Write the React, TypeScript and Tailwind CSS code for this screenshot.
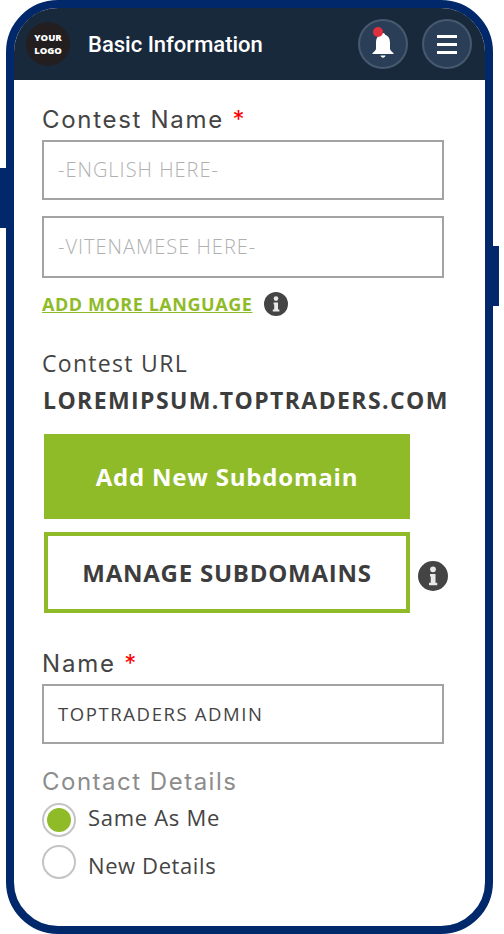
const poppins = "font-['Inter',sans-serif]";
const openSans = "font-['Open_Sans',sans-serif]";

function InfoDot({ size }: { size: string }) {
  return (
    <svg viewBox="0 0 24 24" className={`${size} shrink-0`}>
      <circle cx="12" cy="12" r="12" fill="#444444" />
      <circle cx="12" cy="6.6" r="2.3" fill="#e8e8e8" />
      <path d="M9.6 10.400h4.400v7h1.400v2H8.800v-2h1.400v-5H9.600z" fill="#e8e8e8" />
    </svg>
  );
}

function TextBox({ value, placeholder, className }: { value?: string; placeholder?: string; className: string }) {
  return (
    <div className={`w-[402px] border-2 border-[#a3a3a3] flex items-center pl-[14px] text-[20px] ${openSans} ${className}`}>
      {value ? (
        <span className="text-[#444444] text-[18.5px] tracking-[1.6px]">{value}</span>
      ) : (
        <span className="text-[#b0b0b0] font-light tracking-[1px]">{placeholder}</span>
      )}
    </div>
  );
}

export default function App() {
  return (
    <div className="relative w-[504px] h-[934px] bg-white overflow-hidden">
      {/* side buttons */}
      <div className="absolute left-0 top-[168px] w-[8px] h-[60px] bg-[#00286a]" />
      <div className="absolute left-[490px] top-[246px] w-[9px] h-[60px] bg-[#00286a]" />

      <div className="relative ml-[6px] w-[487px] h-[934px] border-[8px] border-[#00286a] rounded-[52px] bg-white overflow-hidden">
        {/* Header */}
        <header className="h-[72px] bg-[#19293c] flex items-center pl-[12px] pr-[13px]">
          <div className="w-[44px] h-[44px] rounded-full bg-[#231f20] flex flex-col items-center justify-center text-white text-[9.5px] font-extrabold leading-[13px] font-['Open_Sans',sans-serif]">
            <span>YOUR</span>
            <span>LOGO</span>
          </div>
          <h1 className="ml-[18px] text-white text-[22px] font-medium font-['Roboto',sans-serif]">Basic Information</h1>
          <div className="ml-auto flex items-center gap-[14px]">
            <button className="relative w-[50px] h-[50px] rounded-full bg-[#2a3f57] border-2 border-[#47596e] flex items-center justify-center">
              <svg viewBox="0 0 22 26" className="w-[22px] h-[26px] mt-[1px]">
                <path d="M11 1c1.200 0 2 .8 2 1.800C16.600 3.800 18 7 18 11v5.500c0 1.700 1.600 3 3.500 4.500v1H.5v-1C2.400 19.500 4 18.200 4 16.500V11c0-4 1.400-7.200 5-8.200C9 1.800 9.800 1 11 1z" fill="white" />
                <path d="M8.500 23.500h5c-.4 1.400-1.300 2.200-2.500 2.200s-2.100-.8-2.500-2.200z" fill="white" />
              </svg>
              <span className="absolute left-[13px] top-[6px] w-[10px] h-[10px] rounded-full bg-[#e0303f]" />
            </button>
            <button className="w-[50px] h-[50px] rounded-full bg-[#2a3f57] border-2 border-[#47596e] flex flex-col items-center justify-center gap-[5px]">
              <span className="w-[20px] h-[3px] bg-white" />
              <span className="w-[20px] h-[3px] bg-white" />
              <span className="w-[20px] h-[3px] bg-white" />
            </button>
          </div>
        </header>

        {/* Form */}
        <div className="pl-[28px] pt-[22px]">
          <label className={`${poppins} block text-[24px] leading-[36px] h-[38px] text-[#444444] tracking-[1.7px]`}>
            Contest Name <span className="text-[#ff0000]">*</span>
          </label>
          <TextBox placeholder="-ENGLISH HERE-" className="h-[60px]" />
          <TextBox placeholder="-VITENAMESE HERE-" className="h-[62px] mt-[16px]" />

          <div className="flex items-center mt-[14px] h-[24px]">
            <a className={`${openSans} text-[18px] font-bold text-[#8fbb29] underline tracking-[0.55px]`}>ADD MORE LANGUAGE</a>
            <span className="ml-[12px]"><InfoDot size="w-[24px] h-[24px]" /></span>
          </div>

          <div className={`${openSans} mt-[30px] text-[23px] leading-[34px] text-[#444444] tracking-[1.3px]`}>Contest URL</div>
          <div className={`${openSans} mt-[3px] ml-[1px] text-[23px] leading-[34px] font-bold text-[#3d3d3d] tracking-[1.4px] whitespace-nowrap`}>LOREMIPSUM.TOPTRADERS.COM</div>

          <button className={`${openSans} mt-[17px] ml-[2px] block w-[366px] h-[85px] bg-[#8fbb29] text-white text-[24px] font-bold tracking-[0.8px]`}>
            Add New Subdomain
          </button>

          <div className="mt-[13px] ml-[2px] flex items-center">
            <button className={`${openSans} w-[366px] h-[81px] border-4 border-[#8fbb29] text-[#3d3d3d] text-[24px] font-bold tracking-[0.75px]`}>
              MANAGE SUBDOMAINS
            </button>
            <span className="ml-[8px] mt-[6px]"><InfoDot size="w-[30px] h-[30px]" /></span>
          </div>

          <label className={`${poppins} block mt-[33px] text-[24px] leading-[36px] h-[38px] text-[#444444] tracking-[1.8px]`}>
            Name <span className="text-[#ff0000]">*</span>
          </label>
          <TextBox value="TOPTRADERS ADMIN" className="h-[60px]" />

          <div className={`${poppins} mt-[20px] text-[24px] leading-[36px] text-[#8c8c8c] tracking-[1.5px]`}>Contact Details</div>

          <div className="mt-[3px] flex items-center h-[34px]">
            <span className="w-[34px] h-[34px] rounded-full border-2 border-[#c4c4c4] flex items-center justify-center">
              <span className="w-[24px] h-[24px] rounded-full bg-[#8fbb29]" />
            </span>
            <span className={`${openSans} ml-[12px] -mt-[5px] text-[22px] text-[#444444] tracking-[0.7px]`}>Same As Me</span>
          </div>
          <div className="mt-[8px] flex items-center h-[34px]">
            <span className="w-[34px] h-[34px] rounded-full border-2 border-[#c4c4c4]" />
            <span className={`${openSans} ml-[12px] mt-[7px] text-[22px] text-[#444444] tracking-[0.6px]`}>New Details</span>
          </div>
        </div>
      </div>
    </div>
  );
}
